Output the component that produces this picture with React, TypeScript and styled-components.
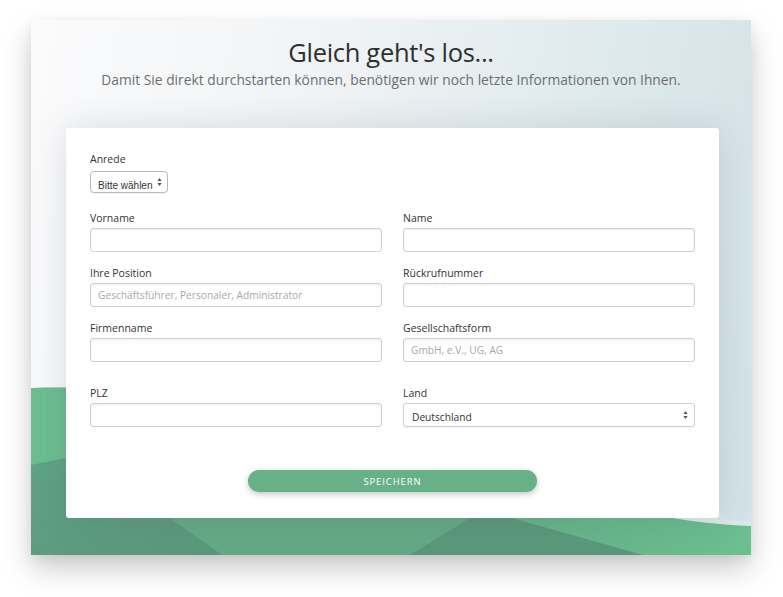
import React from "react";
import styled, { createGlobalStyle } from "styled-components";

const GlobalStyle = createGlobalStyle`
  html, body { margin: 0; padding: 0; background: #ffffff; }
  body { font-family: "Open Sans", "DejaVu Sans", sans-serif; color: #333; }
  * { box-sizing: border-box; }
`;

const Page = styled.div`
  display: flex;
  justify-content: center;
  padding: 20px 0 0 0;
  height: 597px;
`;

const Window = styled.div`
  position: relative;
  width: 720px;
  height: 535px;
  margin-right: 1px;
  overflow: hidden;
  display: flex;
  flex-direction: column;
  align-items: center;
  box-shadow: 0 14px 28px rgba(0, 0, 0, 0.2), 0 4px 10px rgba(0, 0, 0, 0.06);
  background: linear-gradient(100deg, #fbfbfc 0%, #f1f4f6 35%, #dde9ec 75%, #d2e2e7 100%);
`;

const BgArt = styled.svg`
  position: absolute;
  inset: 0;
  width: 100%;
  height: 100%;
  z-index: 0;
`;

const Header = styled.header`
  position: relative;
  z-index: 1;
  display: flex;
  flex-direction: column;
  align-items: center;
  padding-top: 17px;
`;

const Title = styled.h1`
  margin: 0;
  font-family: "Open Sans", sans-serif;
  font-weight: 400;
  font-size: 25.5px;
  line-height: 30px;
  color: #2f2f2f;
  letter-spacing: -0.3px;
`;

const Subtitle = styled.p`
  margin: 3px 0 0;
  font-size: 13.8px;
  line-height: 19px;
  color: #6e6e6e;
`;

const Card = styled.form`
  position: relative;
  z-index: 1;
  align-self: flex-start;
  margin: 39px 0 0 35px;
  width: 653px;
  background: #ffffff;
  border-radius: 3px;
  padding: 23px 24px 26px;
  box-shadow: 0 0 36px rgba(60, 70, 80, 0.16);
  display: flex;
  flex-direction: column;
`;

const Grid = styled.div`
  display: grid;
  grid-template-columns: 292px 292px;
  column-gap: 21px;
  row-gap: 13px;
`;

const Field = styled.div<{ $extraTop?: number; $full?: boolean }>`
  display: flex;
  flex-direction: column;
  align-items: flex-start;
  margin-top: ${(p) => p.$extraTop ?? 0}px;
  grid-column: ${(p) => (p.$full ? "1 / -1" : "auto")};
`;

const Label = styled.label<{ $gap?: number }>`
  font-size: 10.5px;
  line-height: 16px;
  color: #333;
  margin-bottom: ${(p) => p.$gap ?? 2}px;
`;

const Input = styled.input`
  width: 100%;
  height: 24px;
  border: 1px solid #cfcfcf;
  border-radius: 3px;
  box-shadow: inset 0 1px 2px rgba(0, 0, 0, 0.07);
  padding: 0 7px;
  font-family: "Open Sans", sans-serif;
  font-size: 10.2px;
  color: #333;
  background: #fff;
  outline: none;
  &::placeholder { color: #a9a9a9; }
`;

const SelectWrap = styled.div<{ $w?: string; $h: number; $radius: number }>`
  position: relative;
  width: ${(p) => p.$w ?? "100%"};
  height: ${(p) => p.$h}px;
  border: 1px solid ${(p) => (p.$radius > 3 ? "#b9b9b9" : "#cfcfcf")};
  border-radius: ${(p) => p.$radius}px;
  box-shadow: 0 1px 1px rgba(0, 0, 0, 0.05);
  background: #fff;
`;

const NativeSelect = styled.select<{ $font: string; $size: number; $pad: number }>`
  appearance: none;
  -webkit-appearance: none;
  width: 100%;
  height: 100%;
  border: none;
  background: transparent;
  padding: 0 8px 0 ${(p) => p.$pad}px;
  font-family: ${(p) => p.$font};
  font-size: ${(p) => p.$size}px;
  color: #333;
  outline: none;
`;

const Arrows = styled.svg<{ $right: number }>`
  position: absolute;
  right: ${(p) => p.$right}px;
  top: 50%;
  transform: translateY(-50%);
  width: 5px;
  height: 9px;
  pointer-events: none;
`;

const ButtonRow = styled.div`
  display: flex;
  justify-content: center;
  margin-top: 43px;
`;

const SaveButton = styled.button`
  width: 289px;
  height: 22px;
  border: none;
  border-radius: 11px;
  background: #68b087;
  color: #fff;
  font-family: "Open Sans", sans-serif;
  font-size: 9.5px;
  letter-spacing: 0.9px;
  box-shadow: 0 2px 6px rgba(40, 60, 60, 0.3);
  cursor: pointer;
`;

const UpDown: React.FC<{ right: number }> = ({ right }) => (
  <Arrows $right={right} viewBox="0 0 5 9">
    <path d="M2.5 0.5 L4.6 3.6 L0.4 3.6 Z" fill="#555" />
    <path d="M2.5 8.5 L4.6 5.4 L0.4 5.4 Z" fill="#555" />
  </Arrows>
);

export default function App() {
  return (
    <>
      <GlobalStyle />
      <Page>
        <Window>
          <BgArt viewBox="0 0 720 535" preserveAspectRatio="none">
            <defs>
              <linearGradient id="lg" x1="0" y1="0" x2="1" y2="0">
                <stop offset="0" stopColor="#6cbe92" />
                <stop offset="0.7" stopColor="#66b28a" />
                <stop offset="1" stopColor="#6bbf90" />
              </linearGradient>
              <linearGradient id="dk" x1="0" y1="0" x2="1" y2="1">
                <stop offset="0" stopColor="#61a385" />
                <stop offset="1" stopColor="#5a967a" />
              </linearGradient>
              <linearGradient id="hl" x1="0" y1="0" x2="0" y2="1">
                <stop offset="0" stopColor="#c5d6de" />
                <stop offset="1" stopColor="#e4edf0" />
              </linearGradient>
            </defs>
            <path d="M0 368 C 120 362, 300 380, 460 440 C 560 478, 640 498, 720 501 L720 535 L0 535 Z" fill="url(#hl)" opacity="0.7" />
            <path d="M0 368 C 120 364, 300 384, 460 446 C 560 484, 640 503, 720 506 L720 535 L0 535 Z" fill="url(#lg)" />
            <path d="M0 445 L 40 437 L 139 498 L 192 535 L 0 535 Z" fill="url(#dk)" />
            <path d="M40 437 L 533 440 L 439 498 L 379 535 L 192 535 L 139 498 Z" fill="#64a986" />
            <path d="M452 490 L 612 535 L 379 535 Z" fill="#5b987b" />
          </BgArt>
          <Header>
            <Title>Gleich geht's los...</Title>
            <Subtitle>
              Damit Sie direkt durchstarten können, benötigen wir noch letzte Informationen von Ihnen.
            </Subtitle>
          </Header>
          <Card onSubmit={(e) => e.preventDefault()}>
            <Grid>
              <Field $full>
                <Label $gap={4}>Anrede</Label>
                <SelectWrap $w="78px" $h={22} $radius={4}>
                  <NativeSelect
                    $font='"Liberation Sans", Arial, sans-serif'
                    $size={10}
                    $pad={7}
                    defaultValue="x"
                  >
                    <option value="x">Bitte wählen</option>
                    <option value="h">Herr</option>
                    <option value="f">Frau</option>
                  </NativeSelect>
                  <UpDown right={5} />
                </SelectWrap>
              </Field>
              <Field $extraTop={4}>
                <Label>Vorname</Label>
                <Input />
              </Field>
              <Field $extraTop={4}>
                <Label>Name</Label>
                <Input />
              </Field>
              <Field>
                <Label>Ihre Position</Label>
                <Input placeholder="Geschäftsführer, Personaler, Administrator" />
              </Field>
              <Field>
                <Label>Rückrufnummer</Label>
                <Input />
              </Field>
              <Field>
                <Label>Firmenname</Label>
                <Input />
              </Field>
              <Field>
                <Label>Gesellschaftsform</Label>
                <Input placeholder="GmbH, e.V., UG, AG" />
              </Field>
              <Field $extraTop={10}>
                <Label>PLZ</Label>
                <Input />
              </Field>
              <Field $extraTop={10}>
                <Label>Land</Label>
                <SelectWrap $h={24} $radius={3}>
                  <NativeSelect
                    $font='"Open Sans", sans-serif'
                    $size={10.2}
                    $pad={8}
                    defaultValue="de"
                  >
                    <option value="de">Deutschland</option>
                    <option value="at">Österreich</option>
                    <option value="ch">Schweiz</option>
                  </NativeSelect>
                  <UpDown right={6} />
                </SelectWrap>
              </Field>
            </Grid>
            <ButtonRow>
              <SaveButton type="submit">SPEICHERN</SaveButton>
            </ButtonRow>
          </Card>
        </Window>
      </Page>
    </>
  );
}
